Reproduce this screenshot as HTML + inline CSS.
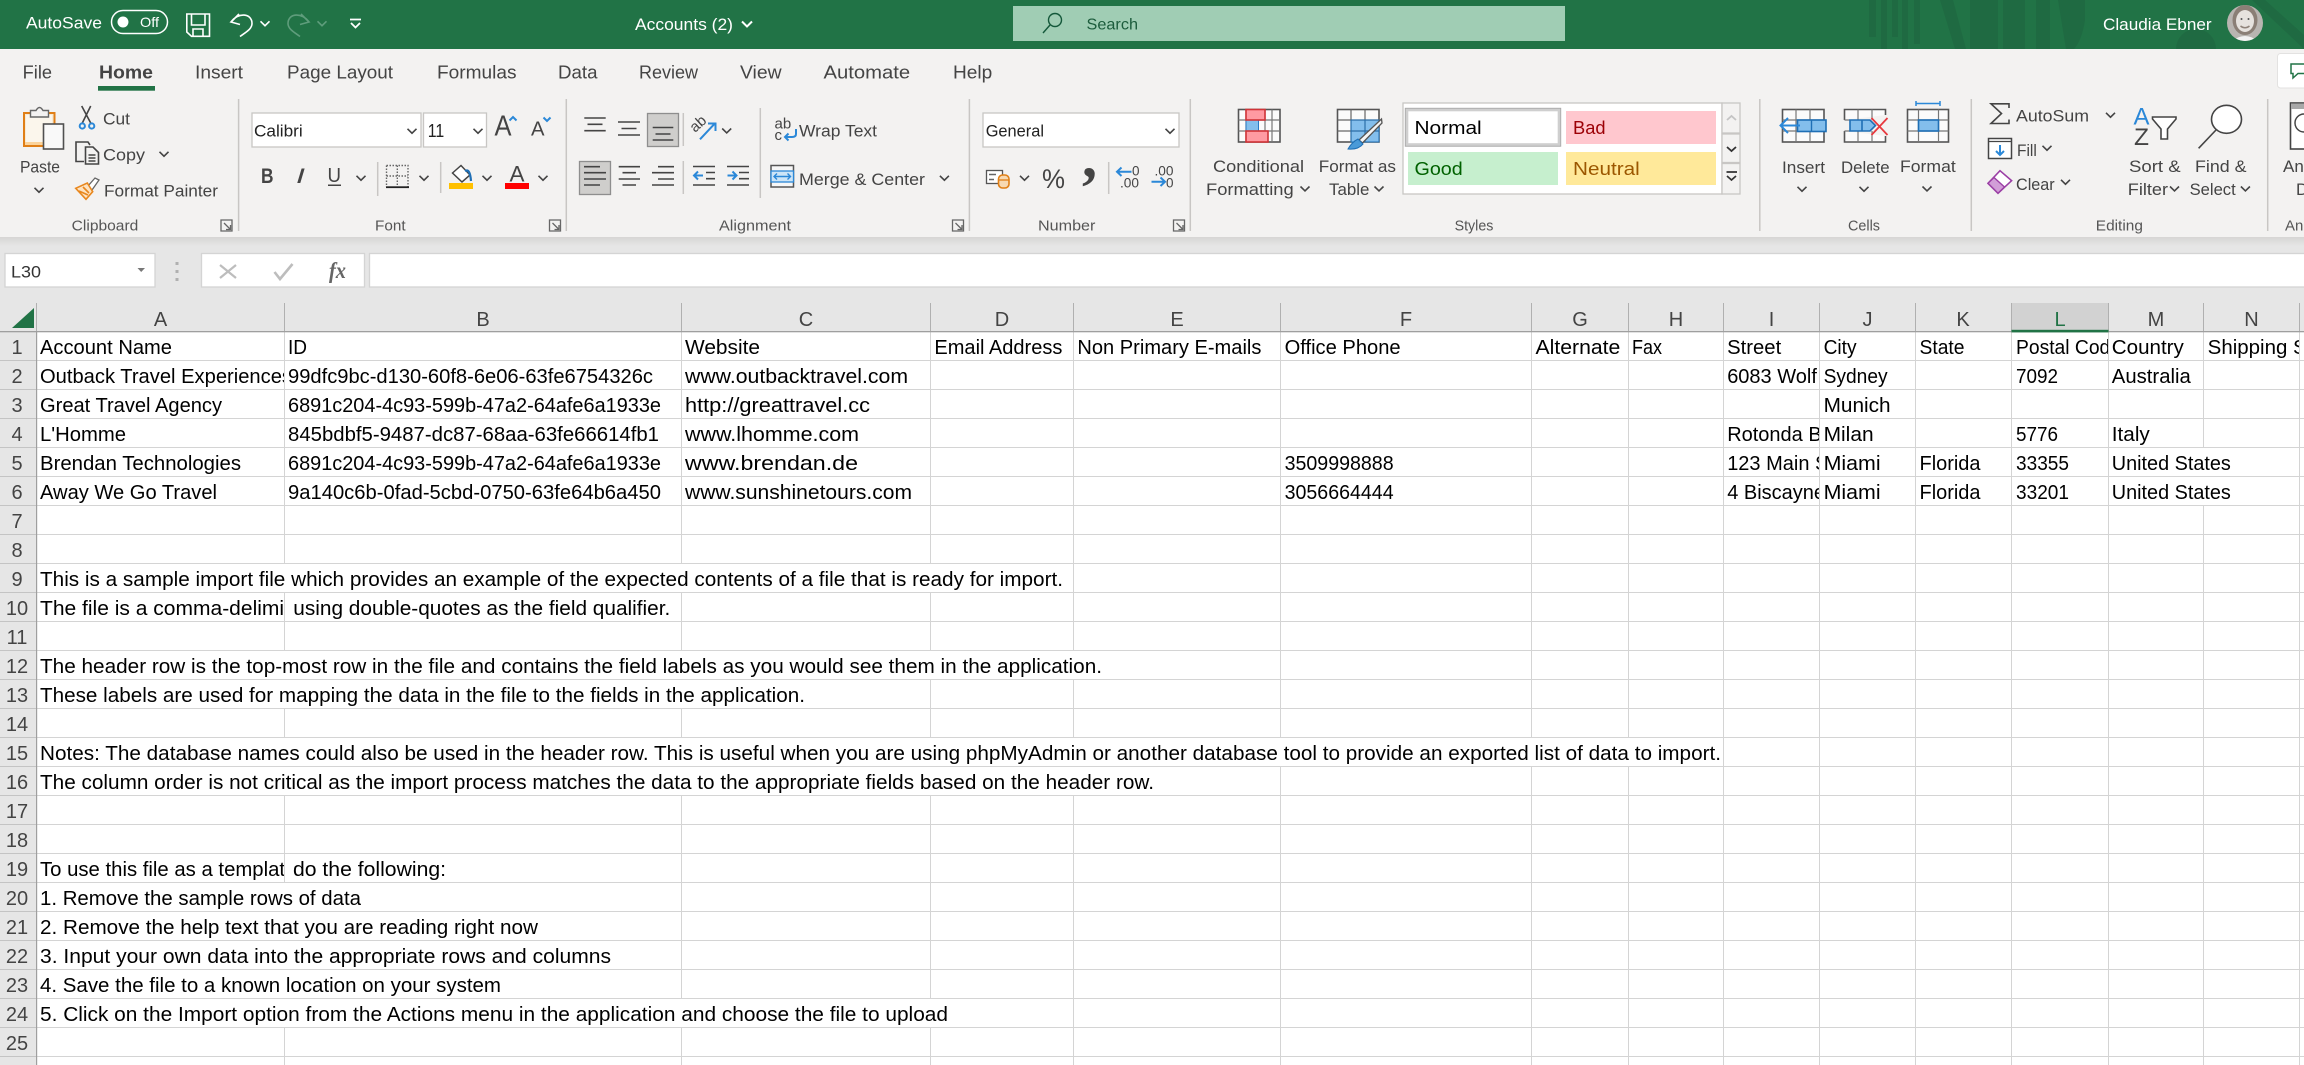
<!DOCTYPE html>
<html lang="en"><head><meta charset="utf-8"><title>Accounts (2) - Excel</title>
<style>
html,body{margin:0;padding:0;width:2304px;height:1065px;overflow:hidden;background:#fff}
svg{display:block}
text{font-family:"Liberation Sans",sans-serif;white-space:pre}
.c{font-size:20px;fill:#000}
.h{font-size:20px;fill:#444;text-anchor:middle}
.r{font-size:17px;fill:#444}
.g{font-size:15px;fill:#555}
.t{font-size:18px;fill:#444}
.w{font-size:17px;fill:#fff}
.ch{fill:none;stroke:#444;stroke-width:1.6}
.ic{fill:none;stroke:#444;stroke-width:1.6}
.bl{fill:none;stroke:#2b88d8;stroke-width:2}
.sep{stroke:#c8c6c4;stroke-width:1.5}
</style></head><body>
<svg width="2304" height="1065" viewBox="0 0 2304 1065" xmlns="http://www.w3.org/2000/svg">
<defs>
<path id="v" d="M-4.5 -2.2 L0 2.2 L4.5 -2.2"/>
<path id="dl" d="M0.5 0.5 H11.5 V11.5 H0.5 Z M3.5 3.5 L10 10 M10 5.5 V10 H5.5" fill="none" stroke="#666" stroke-width="1.3"/>
<linearGradient id="shd" x1="0" y1="0" x2="0" y2="1"><stop offset="0" stop-color="#d6d5d4"/><stop offset="1" stop-color="#e6e6e6"/></linearGradient>
<clipPath id="cA"><rect x="37" y="332" width="247" height="733"/></clipPath>
<clipPath id="cG"><rect x="1532" y="332" width="96" height="40"/></clipPath>
<clipPath id="cI"><rect x="1724" y="332" width="95" height="180"/></clipPath>
<clipPath id="cL"><rect x="2012" y="332" width="96" height="40"/></clipPath>
<clipPath id="cN"><rect x="2204" y="332" width="95" height="40"/></clipPath>
<clipPath id="av"><circle cx="2245" cy="23" r="18"/></clipPath>
</defs>

<!-- page background -->
<rect width="2304" height="1065" fill="#fff"/>
<rect y="237" width="2304" height="95" fill="#e6e6e6"/>

<!-- title bar -->
<rect width="2304" height="49" fill="#217346"/>
<g fill="#1f6a42">
<rect x="1869" y="0" width="7" height="37"/><rect x="1881" y="0" width="6" height="49"/><rect x="1892" y="0" width="6" height="37"/><rect x="1902" y="0" width="6" height="49"/><rect x="1914" y="0" width="6" height="44"/>
<path d="M1940 0 H1953 L1966 49 H1955 Z"/><rect x="1970" y="0" width="28" height="49"/><rect x="2003" y="0" width="22" height="49"/><rect x="2036" y="0" width="14" height="49"/>
<path d="M2058 0 H2085 V20 Q2082 40 2074 49 H2066 Z"/>
<path d="M2176 49 a20 20 0 0 1 40 0 Z"/><path d="M2265 0 L2304 35 V49 L2252 0 Z"/>
</g>
<text class="w" x="26" y="28.5" textLength="76" lengthAdjust="spacingAndGlyphs">AutoSave</text>
<rect x="111.5" y="10.5" width="56" height="23" rx="11.5" fill="none" stroke="#fff" stroke-width="1.5"/>
<circle cx="123" cy="22" r="5.5" fill="#fff"/>
<text x="140" y="27" font-size="14" fill="#fff" textLength="19" lengthAdjust="spacingAndGlyphs">Off</text>
<g fill="none" stroke="#fff" stroke-width="1.6">
<path d="M186.8 14 H209.5 V36.3 H191.5 L186.8 32 Z M191.5 14 V25 H205 V14 M193 36.3 V29 H203 V36.3"/>
<path d="M239 14 L231 22 L240 24.5 M231 22 C238 12 252 13 252 23.5 C252 29 246 32 240 36.5"/>
<use href="#v" x="265" y="23.5"/>
</g>
<g fill="none" stroke="#5f9d7c" stroke-width="1.6">
<path d="M301 14 L309 22 L300 24.5 M309 22 C302 12 288 13 288 23.5 C288 29 294 32 300 36.5"/>
<use href="#v" x="322" y="23.5"/>
</g>
<path d="M350 19.5 H361 M351 23 L355.5 27.5 L360 23" fill="none" stroke="#fff" stroke-width="1.8"/>
<text class="w" x="635" y="30" textLength="98" lengthAdjust="spacingAndGlyphs">Accounts (2)</text>
<path d="M742 21.5 L747 26.5 L752 21.5" fill="none" stroke="#fff" stroke-width="2"/>
<rect x="1013" y="6" width="552" height="35" fill="#a0cdb4"/>
<circle cx="1055" cy="20" r="6.5" fill="none" stroke="#14583a" stroke-width="1.4"/><path d="M1050 25 L1043 33" stroke="#14583a" stroke-width="1.4"/>
<text x="1086.5" y="29.5" font-size="16" fill="#1c5c3c" textLength="51.5" lengthAdjust="spacingAndGlyphs">Search</text>
<text class="w" x="2103" y="30" font-size="16" textLength="108.6" lengthAdjust="spacingAndGlyphs">Claudia Ebner</text>
<g clip-path="url(#av)">
<rect x="2226" y="4" width="38" height="38" fill="#b9b5b1"/>
<ellipse cx="2245" cy="20" rx="12.5" ry="15" fill="#8b7f76"/>
<ellipse cx="2245" cy="21" rx="9" ry="11" fill="#e6e2de"/>
<path d="M2240.5 26 Q2245 29.5 2249.5 26" fill="none" stroke="#8f8279" stroke-width="1.5"/>
<circle cx="2241.5" cy="19" r="1" fill="#555"/><circle cx="2248.5" cy="19" r="1" fill="#555"/>
<path d="M2231 42 Q2245 30 2259 42 Z" fill="#f2f2f2"/>
</g>

<!-- ribbon -->
<rect y="49" width="2304" height="188" fill="#f3f2f1"/>
<rect y="237" width="2304" height="9" fill="url(#shd)"/>

<!-- tabs -->
<text class="t" x="22.7" y="78.7" textLength="29.3" lengthAdjust="spacingAndGlyphs">File</text>
<text class="t" x="99" y="78.7" font-weight="bold" fill="#3a3a3a" textLength="54" lengthAdjust="spacingAndGlyphs">Home</text>
<rect x="98" y="86" width="57" height="4.7" fill="#217346"/>
<text class="t" x="195" y="78.7" textLength="48" lengthAdjust="spacingAndGlyphs">Insert</text>
<text class="t" x="287" y="78.7" textLength="106" lengthAdjust="spacingAndGlyphs">Page Layout</text>
<text class="t" x="437" y="78.7" textLength="79.6" lengthAdjust="spacingAndGlyphs">Formulas</text>
<text class="t" x="558" y="78.7" textLength="39.5" lengthAdjust="spacingAndGlyphs">Data</text>
<text class="t" x="639" y="78.7" textLength="59" lengthAdjust="spacingAndGlyphs">Review</text>
<text class="t" x="740" y="78.7" textLength="41.6" lengthAdjust="spacingAndGlyphs">View</text>
<text class="t" x="823.5" y="78.7" textLength="86.7" lengthAdjust="spacingAndGlyphs">Automate</text>
<text class="t" x="953" y="78.7" textLength="39.3" lengthAdjust="spacingAndGlyphs">Help</text>
<rect x="2277.5" y="53.5" width="40" height="34.5" rx="3" fill="#fff" stroke="#e3e2e1"/>
<path d="M2291 64 H2312 V73.5 H2298 L2293 78 V73.5 H2291 Z" fill="none" stroke="#217346" stroke-width="1.5"/>

<!-- group separators -->
<g class="sep">
<line x1="238.6" y1="99" x2="238.6" y2="231"/><line x1="566.3" y1="99" x2="566.3" y2="231"/><line x1="969.4" y1="99" x2="969.4" y2="231"/><line x1="1190.3" y1="99" x2="1190.3" y2="231"/><line x1="1759.8" y1="99" x2="1759.8" y2="231"/><line x1="1971.3" y1="99" x2="1971.3" y2="231"/><line x1="2267.7" y1="99" x2="2267.7" y2="231"/>
<line x1="377.7" y1="162" x2="377.7" y2="196"/><line x1="440.7" y1="162" x2="440.7" y2="193"/><line x1="683.3" y1="113" x2="683.3" y2="146"/><line x1="683.3" y1="161" x2="683.3" y2="194"/><line x1="760.3" y1="108" x2="760.3" y2="198"/><line x1="1108.7" y1="162" x2="1108.7" y2="194"/>
</g>

<!-- group labels -->
<text class="g" x="71.7" y="230.7" textLength="66.6" lengthAdjust="spacingAndGlyphs">Clipboard</text>
<text class="g" x="375" y="230.7" textLength="30.6" lengthAdjust="spacingAndGlyphs">Font</text>
<text class="g" x="719" y="230.7" textLength="72" lengthAdjust="spacingAndGlyphs">Alignment</text>
<text class="g" x="1038" y="230.7" textLength="57.4" lengthAdjust="spacingAndGlyphs">Number</text>
<text class="g" x="1454.6" y="230.7" textLength="38.8" lengthAdjust="spacingAndGlyphs">Styles</text>
<text class="g" x="1848" y="230.7" textLength="32" lengthAdjust="spacingAndGlyphs">Cells</text>
<text class="g" x="2095.8" y="230.7" textLength="47.1" lengthAdjust="spacingAndGlyphs">Editing</text>
<text class="g" x="2285" y="230.7">Analysis</text>
<use href="#dl" x="220.5" y="219.5"/><use href="#dl" x="549" y="219.5"/><use href="#dl" x="952" y="219.5"/><use href="#dl" x="1173" y="219.5"/>

<!-- clipboard -->
<rect x="24" y="113" width="30.5" height="33" fill="#f7ead4" stroke="#e07f16" stroke-width="2"/>
<rect x="26" y="115" width="26" height="27" fill="#fbf6ec"/>
<rect x="25" y="142" width="28" height="3" fill="#fbd39b"/>
<path d="M30.5 117 V110.5 H36 Q39.5 104.5 43 110.5 H48.5 V117 Z" fill="#f3f2f1" stroke="#666" stroke-width="1.4"/>
<rect x="43.5" y="124" width="20" height="25" fill="#f9f9f9" stroke="#505050" stroke-width="1.6"/>
<text class="r" x="20" y="172.7" textLength="40" lengthAdjust="spacingAndGlyphs">Paste</text>
<use href="#v" class="ch" x="39" y="190"/>
<path d="M81.7 106 L90.7 123 M90.7 106 L82.3 123" class="ic" stroke-width="1.3"/>
<circle cx="82.3" cy="126" r="2.6" class="bl" stroke-width="1.5"/><circle cx="91.7" cy="126" r="2.6" class="bl" stroke-width="1.5"/>
<text class="r" x="103" y="124.3" textLength="27" lengthAdjust="spacingAndGlyphs">Cut</text>
<path d="M84 161.5 H76 V142 H88 L90 145" class="ic" stroke-width="1.4"/>
<path d="M85.5 164 V147 H93 L98.5 152.5 V164 Z M88.5 155 H95.5 M88.5 158 H95.5 M88.5 161 H95.5" class="ic" stroke-width="1.3"/>
<text class="r" x="103" y="160.7" textLength="42" lengthAdjust="spacingAndGlyphs">Copy</text>
<use href="#v" class="ch" x="164" y="154"/>
<path d="M99 180 L95 178 L88 186 L92 190 Z" fill="#fff" stroke="#666" stroke-width="1.3"/>
<path d="M75.7 188.3 L87.3 183 L92.7 191.7 L86 199.3 Z M79 191 L88 195 M83 187 L89 193" fill="#fde3c2" stroke="#e8871e" stroke-width="1.6"/>
<text class="r" x="104" y="196.6" textLength="114" lengthAdjust="spacingAndGlyphs">Format Painter</text>

<!-- font -->
<rect x="252" y="113" width="169" height="34" fill="#fff" stroke="#c8c6c4" stroke-width="1.3"/>
<text x="254" y="136.7" font-size="17" fill="#222" textLength="48.7" lengthAdjust="spacingAndGlyphs">Calibri</text>
<use href="#v" class="ch" x="412" y="131"/>
<rect x="423.5" y="113" width="63" height="34" fill="#fff" stroke="#c8c6c4" stroke-width="1.3"/>
<text x="427.7" y="137" font-size="18" fill="#222" textLength="16.5" lengthAdjust="spacingAndGlyphs">11</text>
<use href="#v" class="ch" x="478" y="131"/>
<text x="494.5" y="135.7" font-size="29" fill="#444" textLength="17" lengthAdjust="spacingAndGlyphs">A</text>
<path d="M509.5 120.5 L513 117 L516.5 120.5" class="bl" stroke-width="1.8"/>
<text x="531" y="135.7" font-size="20" fill="#444" textLength="13.5" lengthAdjust="spacingAndGlyphs">A</text>
<path d="M543.5 117.5 L547 121 L550.5 117.5" class="bl" stroke-width="1.8"/>
<text x="261" y="183" font-size="21" font-weight="bold" fill="#444" textLength="12.5" lengthAdjust="spacingAndGlyphs">B</text>
<text x="296" y="183" font-size="21" font-style="italic" fill="#444" textLength="9" lengthAdjust="spacingAndGlyphs">I</text>
<text x="327.5" y="182" font-size="20" fill="#444" textLength="13.5" lengthAdjust="spacingAndGlyphs">U</text>
<rect x="328" y="184.5" width="13" height="1.5" fill="#444"/>
<use href="#v" class="ch" x="361" y="178"/>
<path d="M386.5 165.5 H408 V187 M386.5 165.5 V187 M397.3 165.5 V187 M386.5 176 H408" fill="none" stroke="#666" stroke-width="1.4" stroke-dasharray="1.5 1.5"/>
<rect x="386" y="186.3" width="23" height="1.8" fill="#222"/>
<use href="#v" class="ch" x="424" y="178"/>
<path d="M452.5 173 L461 165.5 L470 175 L462 182 Z" fill="#fff" stroke="#444" stroke-width="1.5"/>
<path d="M465 171 Q470 168 471 181" fill="none" stroke="#1f6fb5" stroke-width="2.2"/>
<rect x="449" y="183" width="24" height="6" fill="#ffc000"/>
<use href="#v" class="ch" x="487" y="178"/>
<text x="509.5" y="181.5" font-size="22" fill="#444" textLength="15" lengthAdjust="spacingAndGlyphs">A</text>
<rect x="505" y="183" width="24" height="6" fill="#f00"/>
<use href="#v" class="ch" x="543" y="178"/>

<!-- alignment -->
<path d="M584.3 118 H605.7 M587.5 124.3 H602.5 M584.3 130.7 H605.7 M618 122 H640 M621.5 128.5 H636.5 M618 135 H640" class="ic" stroke-width="1.6"/>
<rect x="647.5" y="113.5" width="31" height="33" fill="#cfcecc" stroke="#8e8e8e" stroke-width="1.3"/>
<path d="M652.7 127.5 H673.3 M655.5 134 H670.5 M652.7 140 H673.3" class="ic" stroke-width="1.6"/>
<text transform="rotate(-42 695 133)" x="695" y="133" font-size="15" fill="#444">ab</text>
<path d="M700 139.3 L715 123.3 M708 123.5 H715.5 V131" class="bl"/>
<use href="#v" class="ch" x="726.7" y="130.7"/>
<rect x="579.5" y="161.5" width="31" height="33" fill="#cfcecc" stroke="#8e8e8e" stroke-width="1.3"/>
<path d="M584 166.7 H600 M584 172.7 H606 M584 179 H606 M584 185 H600" class="ic" stroke-width="1.6"/>
<path d="M618.7 166.7 H640 M622.5 172.7 H636 M618.7 179 H640 M622.5 185 H636" class="ic" stroke-width="1.6"/>
<path d="M658 166.7 H674 M652 172.7 H674 M658 179 H674 M652 185 H674" class="ic" stroke-width="1.6"/>
<path d="M693 166.5 H715 M706 172.5 H715 M706 178.7 H715 M693 185 H715" class="ic" stroke-width="1.5"/>
<path d="M703 175.5 H694 M698 171.5 L694 175.5 L698 179.5" class="bl"/>
<path d="M727 166.5 H749 M739 172.5 H749 M739 178.7 H749 M727 185 H749" class="ic" stroke-width="1.5"/>
<path d="M727.5 175.5 H736 M732.5 171.5 L736.5 175.5 L732.5 179.5" class="bl"/>
<text x="774.5" y="128.5" font-size="15" fill="#444">ab</text><text x="774.5" y="140" font-size="15" fill="#444">c</text>
<path d="M796 129 V134 Q796 137 792 137 H785 M788.5 133.5 L785 137 L788.5 140.5" class="bl" stroke-width="1.6"/>
<text class="r" x="799" y="136.6" textLength="78" lengthAdjust="spacingAndGlyphs">Wrap Text</text>
<rect x="771" y="165.5" width="22.5" height="21.5" fill="#f7f7f7" stroke="#555" stroke-width="1.5"/>
<rect x="771" y="171" width="22.5" height="11" fill="#cde5f7" stroke="#2b88d8" stroke-width="1.3"/>
<path d="M774 176.5 H790.5 M777 173.5 L774 176.5 L777 179.5 M787.5 173.5 L790.5 176.5 L787.5 179.5" fill="none" stroke="#2b88d8" stroke-width="1.4"/>
<text class="r" x="799" y="185" textLength="126" lengthAdjust="spacingAndGlyphs">Merge &amp; Center</text>
<use href="#v" class="ch" x="944.4" y="178"/>

<!-- number -->
<rect x="983" y="113" width="196" height="34" fill="#fff" stroke="#c8c6c4" stroke-width="1.3"/>
<text x="985.7" y="136.7" font-size="17" fill="#222" textLength="58.3" lengthAdjust="spacingAndGlyphs">General</text>
<use href="#v" class="ch" x="1170" y="131"/>
<rect x="986.5" y="170.5" width="16" height="13" fill="#fff" stroke="#555" stroke-width="1.3"/>
<path d="M989 174.5 H996 M989 179.5 H994" stroke="#666" stroke-width="1.5"/>
<rect x="998.5" y="175" width="10.5" height="13" rx="4" fill="#f7d9b2" stroke="#e07f16" stroke-width="1.6"/>
<path d="M998.5 180 H1009" stroke="#e07f16" stroke-width="1.3"/>
<use href="#v" class="ch" x="1024.5" y="178"/>
<text x="1042" y="188" font-size="27" fill="#444" textLength="23" lengthAdjust="spacingAndGlyphs">%</text>
<text x="1082" y="177" font-size="60" font-weight="bold" fill="#444" style="font-family:'Liberation Serif',serif">,</text>
<path d="M1131.5 171.7 H1117 M1121.5 167.5 L1117 171.7 L1121.5 176" class="bl"/>
<text x="1132" y="175.5" font-size="13.5" fill="#444">0</text>
<text x="1120" y="187.7" font-size="13.5" fill="#444" textLength="19" lengthAdjust="spacingAndGlyphs">.00</text>
<text x="1154.5" y="175.5" font-size="13.5" fill="#444" textLength="19" lengthAdjust="spacingAndGlyphs">.00</text>
<path d="M1151.5 181.7 H1165 M1160.5 177.5 L1165 181.7 L1160.5 186" class="bl"/>
<text x="1166" y="187.7" font-size="13.5" fill="#444">0</text>

<!-- conditional formatting icon -->
<rect x="1238.5" y="109.5" width="41.5" height="32.5" fill="#fbfbfb" stroke="#555" stroke-width="1.6"/>
<path d="M1238.5 120 H1280 M1238.5 131 H1280 M1246 109.5 V142 M1265 109.5 V142 M1272 109.5 V142" stroke="#777" stroke-width="1.2"/>
<rect x="1246" y="120" width="12.5" height="11" fill="#83beec" stroke="#2b79c2" stroke-width="1"/>
<rect x="1246" y="109.5" width="19" height="10.5" fill="#ff9aa2" stroke="#d13438" stroke-width="1.6"/>
<rect x="1246" y="131" width="22" height="11" fill="#ff9aa2" stroke="#d13438" stroke-width="1.6"/>
<text class="r" x="1213" y="172" textLength="91" lengthAdjust="spacingAndGlyphs">Conditional</text>
<text class="r" x="1206" y="195" textLength="87.7" lengthAdjust="spacingAndGlyphs">Formatting</text>
<use href="#v" class="ch" x="1305" y="188.7"/>

<!-- format as table icon -->
<rect x="1337.5" y="109.5" width="41.5" height="32.5" fill="#fbfbfb" stroke="#555" stroke-width="1.6"/>
<rect x="1351" y="120" width="28" height="22" fill="#83beec"/>
<path d="M1337.5 120 H1379 M1337.5 131 H1379 M1351 109.5 V142 M1365 109.5 V142" stroke="#666" stroke-width="1.2"/>
<path d="M1351 120 H1379 V142 H1351 Z M1351 131 H1379 M1365 120 V142" fill="none" stroke="#1f6fb5" stroke-width="1"/>
<path d="M1381.5 119 L1359 140 L1362.5 143 L1382 123 Z" fill="#f5f5f5" stroke="#555" stroke-width="1.3"/>
<path d="M1358 139 Q1352 142 1348 149 Q1358 150 1363 144 Z" fill="#4a9ad8" stroke="#1f6fb5" stroke-width="1"/>
<text class="r" x="1318.8" y="172" textLength="77.2" lengthAdjust="spacingAndGlyphs">Format as</text>
<text class="r" x="1329" y="195" textLength="40.4" lengthAdjust="spacingAndGlyphs">Table</text>
<use href="#v" class="ch" x="1379" y="188.7"/>

<!-- styles gallery -->
<rect x="1403" y="103" width="319" height="91" fill="#fff" stroke="#c8c6c4" stroke-width="1.3"/>
<rect x="1405.5" y="108.5" width="155" height="37.5" fill="#fff" stroke="#a8a8a8" stroke-width="1.4"/>
<rect x="1407" y="110" width="152" height="34.5" fill="none" stroke="#cfcfcf" stroke-width="2.6"/>
<text x="1414.5" y="134" font-size="18" fill="#000" textLength="67.2" lengthAdjust="spacingAndGlyphs">Normal</text>
<rect x="1566" y="111" width="150" height="33" fill="#ffc7ce"/>
<text x="1573" y="134" font-size="18" fill="#9c0006" textLength="32.6" lengthAdjust="spacingAndGlyphs">Bad</text>
<rect x="1408" y="152" width="150" height="33" fill="#c6efce"/>
<text x="1414.5" y="175" font-size="18" fill="#006100" textLength="48.2" lengthAdjust="spacingAndGlyphs">Good</text>
<rect x="1566" y="152" width="150" height="33" fill="#ffe99a"/>
<text x="1573" y="175" font-size="18" fill="#9c5700" textLength="66.7" lengthAdjust="spacingAndGlyphs">Neutral</text>
<g fill="#f3f2f1" stroke="#c8c6c4" stroke-width="1.3">
<rect x="1722" y="103" width="18" height="30"/><rect x="1722" y="134" width="18" height="28.5"/><rect x="1722" y="163.5" width="18" height="30.5"/>
</g>
<path d="M1727 120 L1731.5 116 L1736 120" fill="none" stroke="#c4c4c4" stroke-width="1.8"/>
<path d="M1727 147 L1731.5 151 L1736 147" fill="none" stroke="#333" stroke-width="1.8"/>
<path d="M1726.5 172 H1737 M1727 176 L1731.5 180 L1736 176" fill="none" stroke="#333" stroke-width="1.7"/>

<!-- cells -->
<rect x="1782.5" y="109.5" width="41.5" height="32.5" fill="#fbfbfb" stroke="#555" stroke-width="1.6"/>
<path d="M1796 109.5 V142 M1810 109.5 V142 M1782.5 120 H1824 M1782.5 131 H1824" stroke="#777" stroke-width="1.2"/>
<rect x="1797.5" y="120" width="28.5" height="11.5" fill="#83beec" stroke="#1f6fb5" stroke-width="1.6"/>
<path d="M1811.5 120 V131.5" stroke="#1f6fb5" stroke-width="1.4"/>
<path d="M1800 125.5 H1781 M1788 118 L1780.5 125.5 L1788 133" fill="none" stroke="#2b88d8" stroke-width="2"/>
<text class="r" x="1782" y="173" textLength="43" lengthAdjust="spacingAndGlyphs">Insert</text>
<use href="#v" class="ch" x="1802" y="189"/>
<path d="M1844.5 120 V109.5 H1885.5 V115 M1844.5 131 V142 H1885.5 V136" fill="#fbfbfb" stroke="#555" stroke-width="1.6"/>
<path d="M1858 109.5 V120 M1872 109.5 V120 M1858 131 V142 M1872 131 V142 M1844.5 120 H1850 M1844.5 131 H1850" stroke="#777" stroke-width="1.2"/>
<path d="M1850 120 H1870 L1875.5 125.5 L1870 131 H1850 Z M1862 120 V131" fill="#83beec" stroke="#1f6fb5" stroke-width="1.6"/>
<path d="M1871.5 118 L1887.5 135 M1887.5 118 L1871.5 135" fill="none" stroke="#e8393f" stroke-width="1.8"/>
<text class="r" x="1841" y="173" textLength="48.6" lengthAdjust="spacingAndGlyphs">Delete</text>
<use href="#v" class="ch" x="1864" y="189"/>
<path d="M1916 101 V106 M1940 101 V106 M1916 103.5 H1940" fill="none" stroke="#2b88d8" stroke-width="1.5"/>
<rect x="1907.5" y="109.5" width="41" height="32.5" fill="#fbfbfb" stroke="#555" stroke-width="1.6"/>
<path d="M1918.5 109.5 V142 M1938.5 109.5 V142 M1907.5 120 H1948.5 M1907.5 131 H1948.5" stroke="#777" stroke-width="1.2"/>
<rect x="1918.5" y="120" width="20" height="11" fill="#83beec" stroke="#1f6fb5" stroke-width="1.6"/>
<text class="r" x="1900" y="172" textLength="55.8" lengthAdjust="spacingAndGlyphs">Format</text>
<use href="#v" class="ch" x="1927" y="188.7"/>

<!-- editing -->
<path d="M2009 108 V103.8 H1991 L2001.5 113.5 L1991 123.5 H2009 V119.5" class="ic" stroke-width="1.5"/>
<text class="r" x="2016" y="121.6" textLength="73" lengthAdjust="spacingAndGlyphs">AutoSum</text>
<use href="#v" class="ch" x="2110.5" y="115"/>
<rect x="1988.5" y="138.5" width="23" height="20" fill="#fff" stroke="#444" stroke-width="1.5"/>
<path d="M1988.5 141.5 H2011.5" stroke="#444" stroke-width="1.3"/>
<path d="M2000 145 V155 M1996 151 L2000 155 L2004 151" class="bl"/>
<text class="r" x="2017" y="156" textLength="19.8" lengthAdjust="spacingAndGlyphs">Fill</text>
<use href="#v" class="ch" x="2047" y="148"/>
<path d="M2000 170.7 L2011.6 180.7 L1998 193.3 L1988 183.3 Z" fill="#fff" stroke="#9b3fa5" stroke-width="1.6"/>
<path d="M1994 177.5 L2004.5 187 L1998 193.3 L1988 183.3 Z" fill="#d29ed8" stroke="#9b3fa5" stroke-width="1.4"/>
<text class="r" x="2016" y="190" textLength="38.7" lengthAdjust="spacingAndGlyphs">Clear</text>
<use href="#v" class="ch" x="2065.5" y="182"/>
<text x="2133.5" y="124.5" font-size="24" fill="#2b88d8" textLength="16" lengthAdjust="spacingAndGlyphs">A</text>
<text x="2134" y="145" font-size="24" fill="#444" textLength="15" lengthAdjust="spacingAndGlyphs">Z</text>
<path d="M2152.5 117 H2176 V119 L2167.5 129 V139 H2161 V129 L2152.5 119 Z" fill="#fff" stroke="#444" stroke-width="1.6"/>
<text class="r" x="2129" y="172" textLength="51.6" lengthAdjust="spacingAndGlyphs">Sort &amp;</text>
<text class="r" x="2127.8" y="195" textLength="40.2" lengthAdjust="spacingAndGlyphs">Filter</text>
<use href="#v" class="ch" x="2174.5" y="188.7"/>
<ellipse cx="2226.5" cy="119.3" rx="15" ry="14" fill="#fff" stroke="#444" stroke-width="1.6"/>
<path d="M2216 130 L2198.6 148.3" stroke="#444" stroke-width="1.6"/>
<text class="r" x="2195" y="172" textLength="51.5" lengthAdjust="spacingAndGlyphs">Find &amp;</text>
<text class="r" x="2189.6" y="195" textLength="46.1" lengthAdjust="spacingAndGlyphs">Select</text>
<use href="#v" class="ch" x="2245.4" y="188.7"/>
<rect x="2290.5" y="103" width="30" height="46" fill="#fff" stroke="#444" stroke-width="1.6"/>
<rect x="2291" y="103.5" width="30" height="5.5" fill="#a8a8a8"/>
<circle cx="2304" cy="123" r="9" fill="#fff" stroke="#444" stroke-width="1.5"/>
<text class="r" x="2283" y="172">Analyze</text>
<text class="r" x="2296" y="195">Data</text>

<!-- formula bar -->
<rect x="5" y="253.5" width="150" height="33.5" fill="#fff" stroke="#d4d4d4" stroke-width="1.3"/>
<text x="11" y="277.5" font-size="17" fill="#333" textLength="30" lengthAdjust="spacingAndGlyphs">L30</text>
<path d="M137.5 268 H145 L141.2 272 Z" fill="#777"/>
<g fill="#b0b0b0"><rect x="175.5" y="262" width="3" height="3"/><rect x="175.5" y="270" width="3" height="3"/><rect x="175.5" y="278" width="3" height="3"/></g>
<rect x="201.5" y="253.5" width="163" height="33.5" fill="#fff" stroke="#d4d4d4" stroke-width="1.3"/>
<path d="M220 265 L236 278 M236 265 L220 278" fill="none" stroke="#bdbdbd" stroke-width="2.2"/>
<path d="M274.5 272 L280 279 L292.5 264" fill="none" stroke="#bdbdbd" stroke-width="2.6"/>
<text x="329" y="278" font-style="italic" font-weight="bold" font-size="23" fill="#666" textLength="17" lengthAdjust="spacingAndGlyphs" style="font-family:'Liberation Serif',serif">fx</text>
<rect x="369.5" y="253.5" width="1940" height="33.5" fill="#fff" stroke="#d4d4d4" stroke-width="1.3"/>

<!-- sheet headers -->
<rect x="0" y="303" width="2304" height="29" fill="#e6e6e6"/>
<rect x="0" y="332" width="36.5" height="733" fill="#e6e6e6"/>
<rect x="2011.5" y="303" width="97" height="28" fill="#d2d2d2"/>
<polygon points="12,328 34,328 34,308" fill="#217346"/>
<g stroke="#b0b0b0" stroke-width="1">
<line x1="36.5" y1="303" x2="36.5" y2="332"/><line x1="284.5" y1="303" x2="284.5" y2="332"/><line x1="681.5" y1="303" x2="681.5" y2="332"/><line x1="930.5" y1="303" x2="930.5" y2="332"/><line x1="1073.5" y1="303" x2="1073.5" y2="332"/><line x1="1280.5" y1="303" x2="1280.5" y2="332"/><line x1="1531.5" y1="303" x2="1531.5" y2="332"/><line x1="1628.5" y1="303" x2="1628.5" y2="332"/><line x1="1723.5" y1="303" x2="1723.5" y2="332"/><line x1="1819.5" y1="303" x2="1819.5" y2="332"/><line x1="1915.5" y1="303" x2="1915.5" y2="332"/><line x1="2011.5" y1="303" x2="2011.5" y2="332"/><line x1="2108.5" y1="303" x2="2108.5" y2="332"/><line x1="2203.5" y1="303" x2="2203.5" y2="332"/><line x1="2299.5" y1="303" x2="2299.5" y2="332"/>
</g>
<g class="col">
<text class="h" x="160.5" y="326">A</text><text class="h" x="483" y="326">B</text><text class="h" x="806" y="326">C</text><text class="h" x="1002" y="326">D</text><text class="h" x="1177" y="326">E</text><text class="h" x="1406" y="326">F</text><text class="h" x="1580" y="326">G</text><text class="h" x="1676" y="326">H</text><text class="h" x="1771.5" y="326">I</text><text class="h" x="1867.5" y="326">J</text><text class="h" x="1963" y="326">K</text><text class="h" x="2060" y="326" style="fill:#217346">L</text><text class="h" x="2156" y="326">M</text><text class="h" x="2251.5" y="326">N</text>
</g>

<!-- gridlines -->
<path fill="none" stroke="#d4d4d4" stroke-width="1" d="M37 360.5H2304M37 389.5H2304M37 418.5H2304M37 447.5H2304M37 476.5H2304M37 505.5H2304M37 534.5H2304M37 563.5H2304M37 592.5H2304M37 621.5H2304M37 650.5H2304M37 679.5H2304M37 708.5H2304M37 737.5H2304M37 766.5H2304M37 795.5H2304M37 824.5H2304M37 853.5H2304M37 882.5H2304M37 911.5H2304M37 940.5H2304M37 969.5H2304M37 998.5H2304M37 1027.5H2304M37 1056.5H2304
M284.5 332V563.5M284.5 592.5V650.5M284.5 708.5V737.5M284.5 795.5V882.5M284.5 1027.5V1065
M681.5 332V563.5M681.5 592.5V650.5M681.5 708.5V737.5M681.5 795.5V998.5M681.5 1027.5V1065
M930.5 332V563.5M930.5 592.5V650.5M930.5 679.5V737.5M930.5 795.5V998.5M930.5 1027.5V1065
M1073.5 332V650.5M1073.5 679.5V737.5M1073.5 795.5V1065
M1280.5 332V737.5M1280.5 766.5V1065
M1531.5 332V737.5M1531.5 766.5V1065
M1628.5 332V737.5M1628.5 766.5V1065
M1723.5 332V1065M1819.5 332V1065M1915.5 332V1065M2011.5 332V1065M2108.5 332V1065
M2203.5 332V447.5M2203.5 505.5V1065M2299.5 332V1065"/>
<path fill="none" stroke="#c4c4c4" stroke-width="1" d="M0 360.5H36M0 389.5H36M0 418.5H36M0 447.5H36M0 476.5H36M0 505.5H36M0 534.5H36M0 563.5H36M0 592.5H36M0 621.5H36M0 650.5H36M0 679.5H36M0 708.5H36M0 737.5H36M0 766.5H36M0 795.5H36M0 824.5H36M0 853.5H36M0 882.5H36M0 911.5H36M0 940.5H36M0 969.5H36M0 998.5H36M0 1027.5H36M0 1056.5H36"/>
<rect x="0" y="331" width="2304" height="1.3" fill="#9f9f9f"/>
<rect x="36" y="332" width="1.2" height="733" fill="#9f9f9f"/>
<rect x="2011.5" y="329.8" width="97" height="2.6" fill="#217346"/>

<!-- row numbers -->
<g>
<text class="h" x="17" y="354">1</text><text class="h" x="17" y="383">2</text><text class="h" x="17" y="412">3</text><text class="h" x="17" y="441">4</text><text class="h" x="17" y="470">5</text><text class="h" x="17" y="499">6</text><text class="h" x="17" y="528">7</text><text class="h" x="17" y="557">8</text><text class="h" x="17" y="586">9</text><text class="h" x="17" y="615">10</text><text class="h" x="17" y="644">11</text><text class="h" x="17" y="673">12</text><text class="h" x="17" y="702">13</text><text class="h" x="17" y="731">14</text><text class="h" x="17" y="760">15</text><text class="h" x="17" y="789">16</text><text class="h" x="17" y="818">17</text><text class="h" x="17" y="847">18</text><text class="h" x="17" y="876">19</text><text class="h" x="17" y="905">20</text><text class="h" x="17" y="934">21</text><text class="h" x="17" y="963">22</text><text class="h" x="17" y="992">23</text><text class="h" x="17" y="1021">24</text><text class="h" x="17" y="1050">25</text><text class="h" x="17" y="1079">26</text>
</g>

<!-- row 1 -->
<text class="c" x="40" y="354" textLength="132" lengthAdjust="spacingAndGlyphs">Account Name</text>
<text class="c" x="288" y="354" textLength="19" lengthAdjust="spacingAndGlyphs">ID</text>
<text class="c" x="685" y="354" textLength="75" lengthAdjust="spacingAndGlyphs">Website</text>
<text class="c" x="934.4" y="354" textLength="128" lengthAdjust="spacingAndGlyphs">Email Address</text>
<text class="c" x="1077.4" y="354" textLength="184" lengthAdjust="spacingAndGlyphs">Non Primary E-mails</text>
<text class="c" x="1284.6" y="354" textLength="116" lengthAdjust="spacingAndGlyphs">Office Phone</text>
<g clip-path="url(#cG)"><text class="c" x="1535.5" y="354" textLength="152" lengthAdjust="spacingAndGlyphs">Alternate Phone</text></g>
<text class="c" x="1632" y="354" textLength="30" lengthAdjust="spacingAndGlyphs">Fax</text>
<text class="c" x="1727.2" y="354" textLength="54" lengthAdjust="spacingAndGlyphs">Street</text>
<text class="c" x="1823.6" y="354" textLength="33" lengthAdjust="spacingAndGlyphs">City</text>
<text class="c" x="1919.5" y="354" textLength="45" lengthAdjust="spacingAndGlyphs">State</text>
<g clip-path="url(#cL)"><text class="c" x="2016" y="354" textLength="105" lengthAdjust="spacingAndGlyphs">Postal Code</text></g>
<text class="c" x="2111.8" y="354" textLength="72" lengthAdjust="spacingAndGlyphs">Country</text>
<g clip-path="url(#cN)"><text class="c" x="2207.7" y="354" textLength="140" lengthAdjust="spacingAndGlyphs">Shipping Street</text></g>

<!-- row 2 -->
<g clip-path="url(#cA)"><text class="c" x="40" y="383" textLength="252" lengthAdjust="spacingAndGlyphs">Outback Travel Experiences</text></g>
<text class="c" x="288" y="383" textLength="365" lengthAdjust="spacingAndGlyphs">99dfc9bc-d130-60f8-6e06-63fe6754326c</text>
<text class="c" x="685" y="383" textLength="223" lengthAdjust="spacingAndGlyphs">www.outbacktravel.com</text>
<g clip-path="url(#cI)"><text class="c" x="1727.2" y="383">6083 Wolf Street</text></g>
<text class="c" x="1823.6" y="383" textLength="64" lengthAdjust="spacingAndGlyphs">Sydney</text>
<text class="c" x="2016" y="383" textLength="42" lengthAdjust="spacingAndGlyphs">7092</text>
<text class="c" x="2111.8" y="383" textLength="79" lengthAdjust="spacingAndGlyphs">Australia</text>

<!-- row 3 -->
<text class="c" x="40" y="412" textLength="182" lengthAdjust="spacingAndGlyphs">Great Travel Agency</text>
<text class="c" x="288" y="412" textLength="373" lengthAdjust="spacingAndGlyphs">6891c204-4c93-599b-47a2-64afe6a1933e</text>
<text class="c" x="685" y="412" textLength="185" lengthAdjust="spacingAndGlyphs">http://greattravel.cc</text>
<text class="c" x="1823.6" y="412" textLength="67" lengthAdjust="spacingAndGlyphs">Munich</text>

<!-- row 4 -->
<text class="c" x="40" y="441" textLength="86" lengthAdjust="spacingAndGlyphs">L'Homme</text>
<text class="c" x="288" y="441" textLength="371" lengthAdjust="spacingAndGlyphs">845bdbf5-9487-dc87-68aa-63fe66614fb1</text>
<text class="c" x="685" y="441" textLength="174" lengthAdjust="spacingAndGlyphs">www.lhomme.com</text>
<g clip-path="url(#cI)"><text class="c" x="1727.2" y="441">Rotonda Blvd</text></g>
<text class="c" x="1823.6" y="441" textLength="50" lengthAdjust="spacingAndGlyphs">Milan</text>
<text class="c" x="2016" y="441" textLength="42" lengthAdjust="spacingAndGlyphs">5776</text>
<text class="c" x="2111.8" y="441" textLength="38" lengthAdjust="spacingAndGlyphs">Italy</text>

<!-- row 5 -->
<text class="c" x="40" y="470" textLength="201" lengthAdjust="spacingAndGlyphs">Brendan Technologies</text>
<text class="c" x="288" y="470" textLength="373" lengthAdjust="spacingAndGlyphs">6891c204-4c93-599b-47a2-64afe6a1933e</text>
<text class="c" x="685" y="470" textLength="173" lengthAdjust="spacingAndGlyphs">www.brendan.de</text>
<text class="c" x="1284.6" y="470" textLength="109" lengthAdjust="spacingAndGlyphs">3509998888</text>
<g clip-path="url(#cI)"><text class="c" x="1727.2" y="470">123 Main Street</text></g>
<text class="c" x="1823.6" y="470" textLength="57" lengthAdjust="spacingAndGlyphs">Miami</text>
<text class="c" x="1919.5" y="470" textLength="61" lengthAdjust="spacingAndGlyphs">Florida</text>
<text class="c" x="2016" y="470" textLength="53" lengthAdjust="spacingAndGlyphs">33355</text>
<text class="c" x="2111.8" y="470" textLength="119" lengthAdjust="spacingAndGlyphs">United States</text>

<!-- row 6 -->
<text class="c" x="40" y="499" textLength="177" lengthAdjust="spacingAndGlyphs">Away We Go Travel</text>
<text class="c" x="288" y="499" textLength="373" lengthAdjust="spacingAndGlyphs">9a140c6b-0fad-5cbd-0750-63fe64b6a450</text>
<text class="c" x="685" y="499" textLength="227" lengthAdjust="spacingAndGlyphs">www.sunshinetours.com</text>
<text class="c" x="1284.6" y="499" textLength="109" lengthAdjust="spacingAndGlyphs">3056664444</text>
<g clip-path="url(#cI)"><text class="c" x="1727.2" y="499">4 Biscayne Blvd</text></g>
<text class="c" x="1823.6" y="499" textLength="57" lengthAdjust="spacingAndGlyphs">Miami</text>
<text class="c" x="1919.5" y="499" textLength="61" lengthAdjust="spacingAndGlyphs">Florida</text>
<text class="c" x="2016" y="499" textLength="53" lengthAdjust="spacingAndGlyphs">33201</text>
<text class="c" x="2111.8" y="499" textLength="119" lengthAdjust="spacingAndGlyphs">United States</text>

<!-- help text -->
<text class="c" x="40" y="586" textLength="1023" lengthAdjust="spacingAndGlyphs">This is a sample import file which provides an example of the expected contents of a file that is ready for import.</text>
<g clip-path="url(#cA)"><text class="c" x="40" y="615" textLength="306" lengthAdjust="spacingAndGlyphs">The file is a comma-delimited file</text></g>
<text class="c" x="293.3" y="615" textLength="377" lengthAdjust="spacingAndGlyphs">using double-quotes as the field qualifier.</text>
<text class="c" x="40" y="673" textLength="1062" lengthAdjust="spacingAndGlyphs">The header row is the top-most row in the file and contains the field labels as you would see them in the application.</text>
<text class="c" x="40" y="702" textLength="765" lengthAdjust="spacingAndGlyphs">These labels are used for mapping the data in the file to the fields in the application.</text>
<text class="c" x="40" y="760" textLength="1681" lengthAdjust="spacingAndGlyphs">Notes: The database names could also be used in the header row. This is useful when you are using phpMyAdmin or another database tool to provide an exported list of data to import.</text>
<text class="c" x="40" y="789" textLength="1114" lengthAdjust="spacingAndGlyphs">The column order is not critical as the import process matches the data to the appropriate fields based on the header row.</text>
<g clip-path="url(#cA)"><text class="c" x="40" y="876" textLength="262" lengthAdjust="spacingAndGlyphs">To use this file as a template,</text></g>
<text class="c" x="293" y="876" textLength="153" lengthAdjust="spacingAndGlyphs">do the following:</text>
<text class="c" x="40" y="905" textLength="321" lengthAdjust="spacingAndGlyphs">1. Remove the sample rows of data</text>
<text class="c" x="40" y="934" textLength="498" lengthAdjust="spacingAndGlyphs">2. Remove the help text that you are reading right now</text>
<text class="c" x="40" y="963" textLength="571" lengthAdjust="spacingAndGlyphs">3. Input your own data into the appropriate rows and columns</text>
<text class="c" x="40" y="992" textLength="461" lengthAdjust="spacingAndGlyphs">4. Save the file to a known location on your system</text>
<text class="c" x="40" y="1021" textLength="908" lengthAdjust="spacingAndGlyphs">5. Click on the Import option from the Actions menu in the application and choose the file to upload</text>
</svg>
</body></html>
